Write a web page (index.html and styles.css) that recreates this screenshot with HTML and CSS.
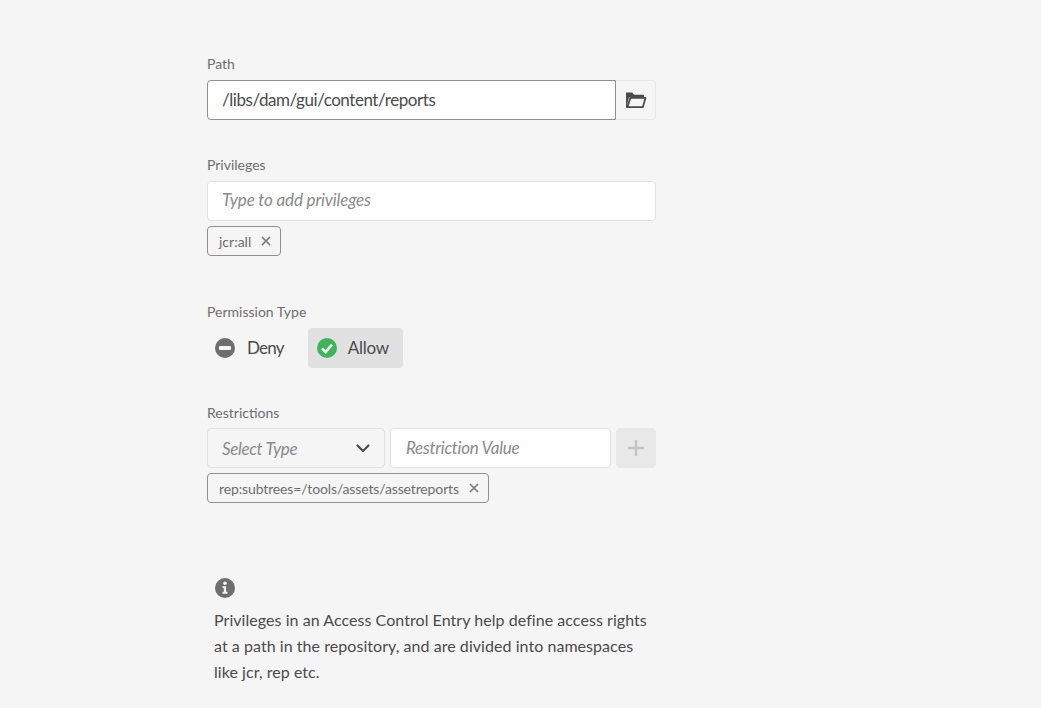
FILE: index.html
```html
<!DOCTYPE html>
<html lang="en">
<head>
    <meta charset="UTF-8">
    <meta name="viewport" content="width=device-width, initial-scale=1.0">
    <title>Add Access Control Entry</title>
    <link rel="stylesheet" href="styles.css">
</head>
<body>

    <form class="ace-form">
        <div class="field field-path">
            <label class="field-label">Path</label>
            <div class="path-row">
                <input class="text-input path-input" type="text" value="/libs/dam/gui/content/reports">
                <button class="browse-btn" type="button" aria-label="Browse">
                    <svg width="22" height="18" viewBox="0 0 22 18">
                        <path fill="#4b4b4b" d="M1 1.5h6.2l2 2.3H18c.6 0 1 .4 1 1V6H5.2c-.7 0-1.2.4-1.4 1L2.4 12.6V17H1.6c-.4 0-.6-.3-.6-.7z"/>
                        <path fill="none" stroke="#4b4b4b" stroke-width="1.8" stroke-linejoin="round" d="M5.3 6.9h15.2l-2.6 9.2H2.5z"/>
                    </svg>
                </button>
            </div>
        </div>

        <div class="field field-privileges">
            <label class="field-label">Privileges</label>
            <input class="text-input privilege-input" type="text" placeholder="Type to add privileges">
            <div class="tag">
                <span>jcr:all</span>
                <svg class="tag-x" width="10" height="10" viewBox="0 0 10 10"><path d="M1 1l8 8M9 1l-8 8" stroke="#7a7a7a" stroke-width="1.7"/></svg>
            </div>
        </div>

        <div class="field field-permission">
            <label class="field-label">Permission Type</label>
            <div class="radio-row">
                <div class="radio-opt">
                    <svg width="20" height="20" viewBox="0 0 20 20">
                        <circle cx="10" cy="10" r="10" fill="#6e6e6e"/>
                        <rect x="4" y="8" width="12" height="4" rx="1" fill="#f5f5f5"/>
                    </svg>
                    <span>Deny</span>
                </div>
                <div class="radio-opt selected">
                    <svg width="20" height="20" viewBox="0 0 20 20">
                        <circle cx="10" cy="10" r="10" fill="#3fb45c"/>
                        <path d="M5 10.4l3.6 3.6L15 6.6" fill="none" stroke="#f0f5f0" stroke-width="2.6"/>
                    </svg>
                    <span>Allow</span>
                </div>
            </div>
        </div>

        <div class="field field-restrictions">
            <label class="field-label">Restrictions</label>
            <div class="restrict-row">
                <div class="select-box">
                    <span>Select Type</span>
                    <svg width="14" height="9" viewBox="0 0 14 9">
                        <path d="M1.5 1.5L7 7l5.5-5.5" fill="none" stroke="#4b4b4b" stroke-width="2.2" stroke-linecap="round" stroke-linejoin="round"/>
                    </svg>
                </div>
                <input class="text-input value-input" type="text" placeholder="Restriction Value">
                <button class="add-btn" type="button" aria-label="Add">
                    <svg width="16" height="16" viewBox="0 0 16 16">
                        <path d="M8 0v16M0 8h16" stroke="#c4c4c4" stroke-width="2.4"/>
                    </svg>
                </button>
            </div>
            <div class="tag">
                <span class="tag-long">rep:subtrees=/tools/assets/assetreports</span>
                <svg class="tag-x" width="10" height="10" viewBox="0 0 10 10"><path d="M1 1l8 8M9 1l-8 8" stroke="#7a7a7a" stroke-width="1.7"/></svg>
            </div>
        </div>

        <div class="info">
            <svg width="20" height="20" viewBox="0 0 20 20">
                <circle cx="10" cy="10" r="10" fill="#6e6e6e"/>
                <circle cx="10" cy="5.2" r="1.8" fill="#f5f5f5"/>
                <path d="M7.5 8.2h3.6v5.6h1.4v1.9h-5v-1.9h1.3V10H7.5z" fill="#f5f5f5"/>
            </svg>
            <p>Privileges in an Access Control Entry help define access rights at a path in the repository, and are divided into namespaces like jcr, rep etc.</p>
        </div>
    </form>

</body>
</html>
```

FILE: styles.css
```css
html, body { height: 100%; }
body { margin: 0; background-color: #f5f5f5; color: #4b4b4b; font-family: Lato, "Open Sans", sans-serif; font-size: 16px; overflow: hidden; }

.ace-form { width: 449px; margin-left: 207px; padding-top: 54px; }

.field-label { display: block; height: 20px; line-height: 20px; font-size: 14px; color: #6e6e6e; margin-bottom: 6px; }
.field-privileges { margin-top: 35px; }
.field-permission { margin-top: 46px; }
.field-restrictions { margin-top: 35px; }
.field-restrictions .field-label { margin-bottom: 5px; }

.text-input { box-sizing: border-box; display: block; width: 100%; height: 40px; padding: 0 14px 2px; border: 1px solid #e1e1e1; border-radius: 4px; background: #fff; color: #4b4b4b; font-family: inherit; font-size: 17px; outline: none; }
.text-input::placeholder { color: #8a8a8a; font-style: italic; opacity: 1; }

.path-row { display: flex; }
.path-input { flex: 1; border-color: #8e8e8e; border-radius: 4px 0 0 4px; letter-spacing: -0.44px; }
.privilege-input { padding-bottom: 4px; letter-spacing: -0.15px; }
.browse-btn { width: 40px; height: 40px; padding: 0; display: flex; align-items: center; justify-content: center; border: 1px solid #e8e8e8; border-left: 0; border-radius: 0 4px 4px 0; background: #f5f5f5; }

.tag { box-sizing: border-box; display: flex; align-items: center; gap: 10px; width: max-content; height: 30px; margin-top: 5px; padding: 0 9px 0 11px; border: 1px solid #8e8e8e; border-radius: 4px; font-size: 14px; color: #6e6e6e; }
.tag-long { letter-spacing: -0.13px; }

.radio-row { display: flex; gap: 10px; }
.radio-opt { display: flex; align-items: center; gap: 12px; height: 40px; padding: 0 14px 0 8px; border-radius: 4px; font-size: 17px; color: #4b4b4b; }
.radio-opt span { padding-bottom: 2px; letter-spacing: -0.75px; }
.radio-opt.selected { gap: 11px; padding-left: 9px; background: #e1e1e1; }
.radio-opt.selected span { letter-spacing: -0.3px; }

.restrict-row { display: flex; gap: 5px; }
.select-box { box-sizing: border-box; display: flex; align-items: center; justify-content: space-between; width: 178px; height: 40px; padding: 0 14px; border: 1px solid #e1e1e1; border-radius: 4px; font-size: 17px; font-style: italic; letter-spacing: -0.35px; color: #8a8a8a; }
.value-input { flex: 1; width: auto; min-width: 0; padding-left: 15px; letter-spacing: -0.28px; }
.add-btn { width: 40px; height: 40px; padding: 0; display: flex; align-items: center; justify-content: center; border: 0; border-radius: 4px; background: #e8e8e8; }

.info { margin-top: 75px; padding-left: 8px; }
.info svg { display: block; }
.info p { margin: 9px 0 0 -1px; width: 440px; font-size: 16px; line-height: 26px; letter-spacing: 0.05px; color: #4b4b4b; }
```
